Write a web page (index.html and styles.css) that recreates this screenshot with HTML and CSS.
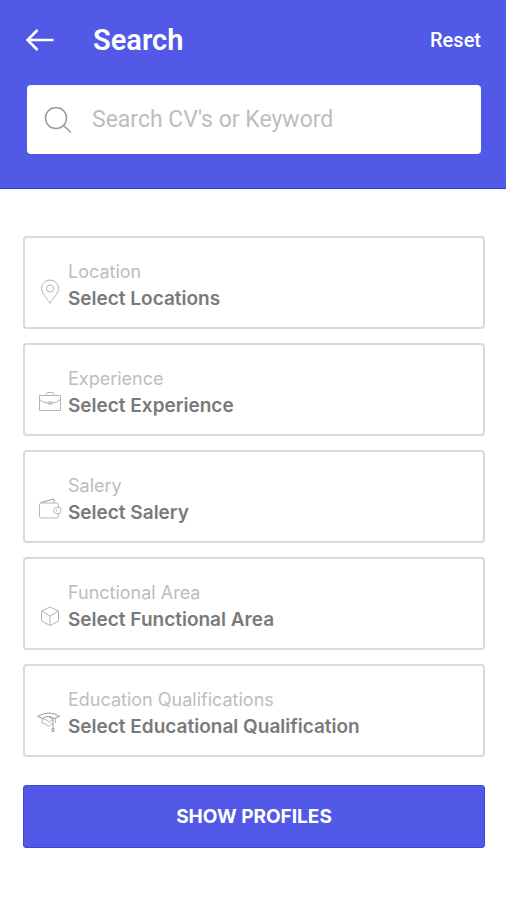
FILE: index.html
```html
<!DOCTYPE html>
<html lang="en">
<head>
<meta charset="utf-8">
<meta name="viewport" content="width=device-width, initial-scale=1">
<title>Search</title>
<link rel="stylesheet" href="styles.css">
</head>
<body>
<form class="page">
  <header class="header">
    <div class="topbar">
      <button class="back" type="button" aria-label="Back">
        <svg class="back-icon" viewBox="0 0 28 24" aria-hidden="true"><path d="M26.500 12H1M10.500 2L.500 12l10 10"/></svg>
      </button>
      <h1 class="title">Search</h1>
      <button class="reset" type="reset">Reset</button>
    </div>
    <label class="searchbox">
      <svg class="search-icon" viewBox="0 0 28 28" aria-hidden="true"><circle cx="12" cy="12" r="10.5"/><path d="M19.500 19.500L27 26.500"/></svg>
      <input class="search-input" type="search" placeholder="Search CV's or Keyword" aria-label="Search CV's or Keyword">
    </label>
  </header>
  <main class="filters">
    <button class="field" type="button">
      <svg class="icon" viewBox="0 0 24 28" aria-hidden="true"><path d="M12 24.500C9 19 3.500 14.500 3.500 9.500a8.500 8.500 0 0 1 17 0C20.500 14.500 15 19 12 24.500z"/><circle cx="12" cy="9.500" r="3.500"/></svg>
      <span class="text"><span class="label">Location</span><span class="value">Select Locations</span></span>
    </button>
    <button class="field" type="button">
      <svg class="icon" viewBox="0 0 24 28" aria-hidden="true"><path d="M1.500 9.500h21v15h-21zM8 9.500V8.500a2 2 0 0 1 2-2h4a2 2 0 0 1 2 2v1M1.500 13.500Q5 17 10 17h4Q19 17 22.500 13.500M10 16h4v2h-4z"/></svg>
      <span class="text"><span class="label">Experience</span><span class="value">Select Experience</span></span>
    </button>
    <button class="field" type="button">
      <svg class="icon" viewBox="0 0 24 28" aria-hidden="true"><path d="M20.500 14.500V12a2 2 0 0 0-2-2H3.500a2 2 0 0 0-2 2v11a2 2 0 0 0 2 2h15a2 2 0 0 0 2-2v-2.500M22 14.500h-3.500a3 3 0 0 0 0 6H22l1-3z"/><path class="dark" d="M3 9.500L15.500 6l1 3.500"/><circle cx="18.500" cy="17.500" r=".5"/></svg>
      <span class="text"><span class="label">Salery</span><span class="value">Select Salery</span></span>
    </button>
    <button class="field" type="button">
      <svg class="icon" viewBox="0 0 24 28" aria-hidden="true"><path d="M12 7l8.500 4v10L12 25.500 3.500 21V11zM3.500 11l8.500 5 8.500-5M12 16v9.500"/></svg>
      <span class="text"><span class="label">Functional Area</span><span class="value">Select Functional Area</span></span>
    </button>
    <button class="field" type="button">
      <svg class="icon" viewBox="0 0 24 28" aria-hidden="true"><path class="dark" d="M-.500 9.500Q5 6 11 6t10.500 3.500L16 11.500Q14 9.500 10.500 9.500T5 11.500z"/><path d="M4 11.500V16Q8 16.500 11 19.500L14.500 16M5 11.500Q9 13 11.500 15L16 11.500M17.500 16V11"/><path class="dark" d="M11 10L15 12.500v9M14 21.500h2v3h-2z"/></svg>
      <span class="text"><span class="label">Education Qualifications</span><span class="value">Select Educational Qualification</span></span>
    </button>
    <button class="submit" type="submit">SHOW PROFILES</button>
  </main>
</form>
</body>
</html>
```

FILE: styles.css
```css
* {
  box-sizing: border-box;
}

body {
  margin: 0;
  background: #fff;
  font-family: Inter, "Liberation Sans", sans-serif;
}

button,
input {
  font: inherit;
}

button {
  margin: 0;
  cursor: pointer;
}

svg {
  flex: none;
  fill: none;
  overflow: visible;
}

.header {
  padding: 20px 25px 34px 27px;
  background: #5159e6;
  border-bottom: 1px solid #3338d2;
}

.topbar {
  display: flex;
  align-items: center;
  height: 40px;
  margin-bottom: 25px;
  color: #fff;
}

.back,
.reset {
  padding: 0;
  border: 0;
  background: none;
  color: inherit;
}

.back {
  display: flex;
  margin-right: 38px;
}

.back-icon {
  width: 28px;
  height: 24px;
  stroke: #fff;
  stroke-width: 2.5;
}

.title {
  flex: 1;
  margin: 0;
  font-family: Roboto, sans-serif;
  font-size: 29px;
  font-weight: 600;
}

.reset {
  font-family: Roboto, sans-serif;
  font-size: 20px;
  font-weight: 500;
}

.searchbox {
  display: flex;
  align-items: center;
  gap: 20px;
  height: 69px;
  padding: 0 17px;
  border-radius: 4px;
  background: #fff;
}

.search-icon {
  width: 28px;
  height: 28px;
  stroke: #999;
  stroke-width: 1.5;
}

.search-input {
  flex: 1;
  min-width: 0;
  padding: 0;
  border: 0;
  outline: 0;
  background: none;
  font-family: Roboto, sans-serif;
  font-size: 23px;
  color: #777;
}

.search-input::placeholder {
  color: #bdbdbd;
  opacity: 1;
}

.filters {
  display: flex;
  flex-direction: column;
  gap: 14px;
  padding: 47px 21px 52px 23px;
}

.field {
  display: flex;
  align-items: flex-end;
  gap: 6px;
  padding: 20px 13px 15px;
  border: 2px solid #d9d9d9;
  border-radius: 4px;
  background: #fff;
  text-align: left;
}

.icon {
  width: 24px;
  height: 28px;
  margin-bottom: 5px;
  stroke: #b5b5b5;
  stroke-width: 1;
}

.dark {
  stroke: #999;
}

.text {
  display: flex;
  flex-direction: column;
  font-size: 19px;
  line-height: 27px;
}

.label {
  color: #bdbdbd;
  font-size: 18px;
}

.value {
  color: #7a7a7a;
  font-weight: 600;
}

.submit {
  height: 63px;
  margin-top: 14px;
  border: 1px solid #3f45da;
  border-radius: 3px;
  background: #5159e6;
  color: #fff;
  font-size: 19px;
  font-weight: 700;
}
```
